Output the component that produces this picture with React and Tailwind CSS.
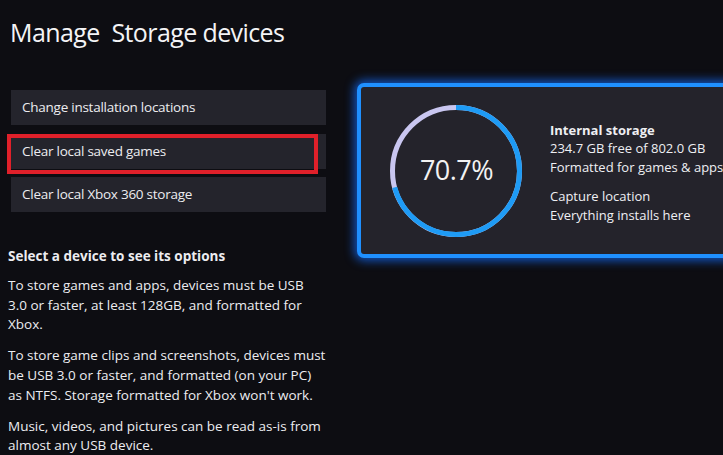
import React from "react";

const font = { fontFamily: '"Open Sans", "Noto Sans", sans-serif' };

function Ring({ pct }) {
  const r = 63.5;
  const c = 2 * Math.PI * r;
  const used = (pct / 100) * c;
  return (
    <div className="relative w-[136px] h-[136px] shrink-0">
      <svg width="136" height="136" viewBox="0 0 136 136" className="absolute inset-0">
        <circle cx="68" cy="68" r={r} fill="none" stroke="#c9c6f0" strokeWidth="5" />
        <circle
          cx="68"
          cy="68"
          r={r}
          fill="none"
          stroke="#1e9bf5"
          strokeWidth="5"
          strokeDasharray={`${used} ${c}`}
          transform="rotate(-90 68 68)"
        />
      </svg>
      <div className="absolute inset-0 flex items-center justify-center text-[27px] text-[#f2f2f2] tracking-[-0.5px] pl-[1px]">
        70.7%
      </div>
    </div>
  );
}

function MenuButton({ children, marked }) {
  return (
    <div className="relative h-[35px] bg-[#24242c] flex items-center pl-[11px] text-[13.5px] tracking-[-0.25px] text-[#ececf0]">
      {children}
      {marked && (
        <div className="absolute left-[-4px] top-0 w-[311px] h-[40px] border-[4px] border-[#e0202a]" />
      )}
    </div>
  );
}

export default function App() {
  return (
    <div
      className="w-[723px] h-[455px] overflow-hidden bg-[#0d0d12] text-[#f0f0f4] relative"
      style={font}
    >
      <h1 className="absolute left-[10px] top-[15px] text-[25px] leading-[34px] text-[#f4f4f6] whitespace-pre tracking-[-0.6px]">
        Manage  Storage devices
      </h1>

      <div className="flex pt-[83px]">
        <div className="w-[315px] ml-[11px] shrink-0">
          <div className="flex flex-col gap-[9px] mt-[7px]">
            <MenuButton>Change installation locations</MenuButton>
            <MenuButton marked>Clear local saved games</MenuButton>
            <div className="-mt-[1px]">
              <MenuButton>Clear local Xbox 360 storage</MenuButton>
            </div>
          </div>

          <div className="-ml-[3px] mt-[35px] text-[13.5px] leading-[19.8px] text-[#ececf0]">
            <p className="font-bold">Select a device to see its options</p>
            <p className="mt-[9px]">
              To store games and apps, devices must be USB 3.0 or faster, at least 128GB, and formatted for Xbox.
            </p>
            <p className="mt-[11px]">
              To store game clips and screenshots, devices must be USB 3.0 or faster, and formatted (on your PC) as NTFS. Storage formatted for Xbox won't work.
            </p>
            <p className="mt-[11px]">
              Music, videos, and pictures can be read as-is from almost any USB device.
            </p>
          </div>
        </div>

        <div className="ml-[31px] w-[420px] h-[175px] shrink-0 rounded-[7px] border-[4px] border-[#1f90ff] bg-[#24232b] shadow-[0_0_10px_3px_rgba(20,110,255,0.7)] flex items-center pl-[27px]">
          <Ring pct={70.7} />
          <div className="ml-[26px] text-[13px] leading-[18.5px] text-[#efeff3] whitespace-nowrap mt-[4px]">
            <p className="font-bold">Internal storage</p>
            <p>234.7 GB free of 802.0 GB</p>
            <p>Formatted for games &amp; apps</p>
            <p className="mt-[11px]">Capture location</p>
            <p>Everything installs here</p>
          </div>
        </div>
      </div>
    </div>
  );
}
